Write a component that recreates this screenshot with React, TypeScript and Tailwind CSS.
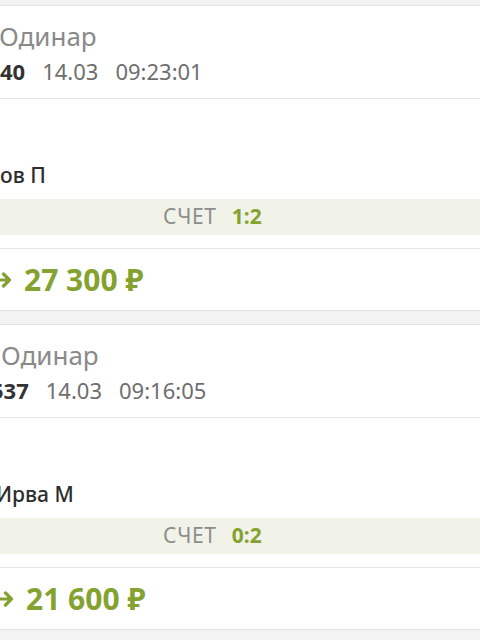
const font = { fontFamily: '"Noto Sans", "Open Sans", sans-serif' };

type Bet = {
  id: string;
  idShift: string;
  date: string;
  time: string;
  name: string;
  nameShift: string;
  score: string;
  amount: string;
  shift: string;
};

const BETS: Bet[] = [
  { id: '40', idShift: 'ml-0', date: '14.03', time: '09:23:01', name: 'ов П', nameShift: 'ml-0', score: '1:2', amount: '27 300 ₽', shift: 'pl-0' },
  { id: '537', idShift: '-ml-[11px]', date: '14.03', time: '09:16:05', name: 'Ирва М', nameShift: '-ml-[6px]', score: '0:2', amount: '21 600 ₽', shift: 'pl-[2px]' },
];

function Arrow() {
  return (
    <svg width="14" height="18" viewBox="0 0 14 18" fill="none" className="shrink-0 -ml-[2px]">
      <path d="M0 9 H11.5 M5.5 3 L11.5 9 L5.5 15" stroke="#84a230" strokeWidth="3.2" strokeLinecap="round" strokeLinejoin="round" />
    </svg>
  );
}

function BetCard({ bet }: { bet: Bet }) {
  return (
    <div className="bg-white border-y border-[#e3e3e3]">
      <div className={`h-[93px] pt-[16px] border-b border-[#e6e6e6] ${bet.shift}`}>
        <p className="text-[26px] leading-[28px] text-[#8a8a8a] -ml-[1px]">Одинар</p>
        <div className="mt-[9px] flex items-center gap-[17px] text-[22px] leading-[24px] text-[#6e6e6e]">
          <span className={`font-bold text-[#333333] ${bet.idShift}`}>{bet.id}</span>
          <span>{bet.date}</span>
          <span>{bet.time}</span>
        </div>
      </div>
      <div className="h-[150px] pt-[64px] border-b border-[#e6e6e6]">
        <p className={`text-[21px] leading-[24px] font-medium text-[#2d2d2d] ${bet.shift}`}>
          <span className={`inline-block ${bet.nameShift}`}>{bet.name}</span>
        </p>
        <div className={`mt-[12px] h-[36px] bg-[#f1f2e8] flex items-center gap-[15px] pl-[163px] ${bet.shift}`}>
          <span className="text-[21px] text-[#8d8d8d] tracking-[0.7px]">СЧЕТ</span>
          <span className="text-[21px] font-bold text-[#84a230]">{bet.score}</span>
        </div>
      </div>
      <div className={`h-[61px] flex items-center gap-[12px] ${bet.shift}`}>
        <Arrow />
        <span className="text-[30px] font-bold text-[#84a230]">{bet.amount}</span>
      </div>
    </div>
  );
}

export default function App() {
  return (
    <div className="w-[480px] h-[640px] overflow-hidden bg-[#f3f3f3] pt-[5px] flex flex-col gap-[13px]" style={font}>
      {BETS.map((bet) => (
        <BetCard key={bet.id} bet={bet} />
      ))}
    </div>
  );
}
